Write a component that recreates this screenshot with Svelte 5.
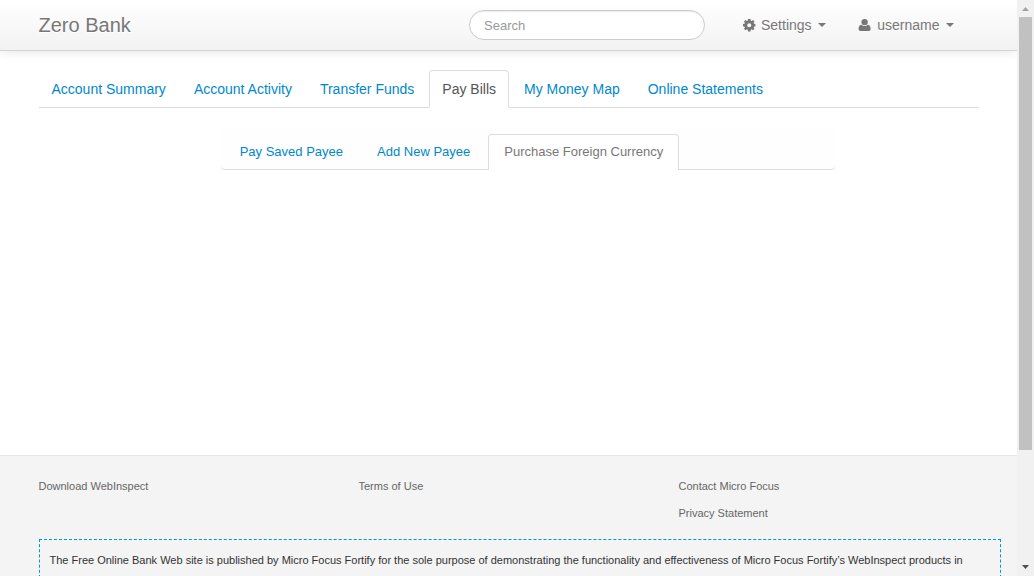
<script>
  const tabs = ['Account Summary', 'Account Activity', 'Transfer Funds', 'Pay Bills', 'My Money Map', 'Online Statements'];
  const billTabs = ['Pay Saved Payee', 'Add New Payee', 'Purchase Foreign Currency'];
  const footerColumns = [['Download WebInspect'], ['Terms of Use'], ['Contact Micro Focus', 'Privacy Statement']];
  const activeTab = 'Pay Bills';
  const activeBillTab = 'Purchase Foreign Currency';
</script>

<div class="window">
  <div class="page">
    <header>
      <div class="container bar">
        <span class="brand">Zero Bank</span>
        <input type="text" placeholder="Search" />
        <div class="menu settings">
          <svg width="14" height="14" viewBox="0 0 14 14" fill="#777">
            <path fill-rule="evenodd" d="M6 1h2.500l.3 1.700.8.350 1.400-1 1.500 1.500-.9 1.350.35.85 1.450.3v2.300l-1.450.3-.35.85.9 1.350-1.500 1.500-1.400-1-.8.350-.3 1.700H6l-.3-1.700-.8-.350-1.400 1-1.500-1.500.9-1.350-.35-.85L1 8.350v-2.300l1.550-.3.35-.85-.9-1.350 1.500-1.500 1.400 1 .8-.350zM7.250 5.150a2.050 2.050 0 1 0 0 4.100 2.050 2.050 0 0 0 0-4.100z" />
          </svg>
          <span>Settings</span><i class="caret"></i>
        </div>
        <div class="menu user">
          <svg width="14" height="14" viewBox="0 0 14 14" fill="#777">
            <circle cx="6.600" cy="4.100" r="3.200" />
            <path d="M3.500 6.700c.8.900 1.900 1.400 3.100 1.400s2.300-.5 3.100-1.400c1.900.1 2.900 1.600 2.900 4.300 0 1.300-.7 2-1.800 2H2.400c-1.100 0-1.800-.7-1.800-2 0-2.700 1-4.200 2.900-4.300z" />
          </svg>
          <span>username</span><i class="caret"></i>
        </div>
      </div>
    </header>

    <main class="container">
      <nav class="tabs">
        {#each tabs as tab}
          <span class="tab" class:active={tab === activeTab}>{tab}</span>
        {/each}
      </nav>
      <nav class="bill-tabs">
        {#each billTabs as tab}
          <span class="bill-tab" class:active={tab === activeBillTab}>{tab}</span>
        {/each}
      </nav>
    </main>

    <footer>
      <div class="container links">
        {#each footerColumns as column}
          <div class="column">
            {#each column as link}<span>{link}</span>{/each}
          </div>
        {/each}
      </div>
      <div class="disclaimer">
        The Free Online Bank Web site is published by Micro Focus Fortify for the sole purpose of demonstrating the functionality and effectiveness of Micro Focus Fortify’s WebInspect products in
      </div>
    </footer>
  </div>

  <div class="scrollbar">
    <svg width="17" height="17" viewBox="0 0 17 17"><path d="M5 11l3.500-4 3.500 4z" fill="#a3a3a3" /></svg>
    <div class="thumb"></div>
    <svg class="down" width="17" height="17" viewBox="0 0 17 17"><path d="M5 6l3.500 4L12 6z" fill="#505050" /></svg>
  </div>
</div>

<style>
  :global(body) {
    margin: 0;
    overflow: hidden;
  }
  .window {
    display: flex;
    width: 1034px;
    height: 576px;
    overflow: hidden;
    background: #fff;
    font: 14px/20px "Liberation Sans", Arial, sans-serif;
    color: #333;
  }
  .page {
    display: flex;
    flex-direction: column;
    width: 1017px;
    height: 576px;
    overflow: hidden;
  }
  .container {
    width: 940px;
    margin: 0 auto;
  }
  header {
    flex: none;
    height: 50px;
    border-bottom: 1px solid #d4d4d4;
    background: linear-gradient(#fff, #f2f2f2);
    box-shadow: 0 1px 10px rgba(0, 0, 0, 0.1);
    color: #777;
    text-shadow: 0 1px 0 #fff;
  }
  .bar {
    display: flex;
    align-items: center;
    height: 50px;
  }
  .brand {
    width: 430.5px;
    font-size: 20px;
  }
  input {
    box-sizing: border-box;
    width: 236px;
    height: 30px;
    padding: 4px 14px;
    border: 1px solid #ccc;
    border-radius: 15px;
    background: #fff;
    box-shadow: inset 0 1px 1px rgba(0, 0, 0, 0.075);
    font: 13px/20px "Liberation Sans", Arial, sans-serif;
  }
  input::placeholder {
    color: #999;
    opacity: 1;
  }
  .menu {
    display: flex;
    align-items: center;
  }
  .settings {
    margin-left: 37px;
  }
  .user {
    margin-left: 32.6px;
  }
  .menu svg {
    margin-right: 5px;
  }
  .caret {
    margin-left: 6px;
    border-top: 4px solid #777;
    border-right: 4px solid transparent;
    border-left: 4px solid transparent;
  }
  .user .caret {
    margin-left: 6.6px;
  }
  main {
    flex: none;
    height: 404px;
  }
  .tabs {
    display: flex;
    gap: 2px;
    height: 37px;
    margin-top: 19px;
    border-bottom: 1px solid #ddd;
  }
  .tab {
    height: 20px;
    padding: 8px 12px;
    border: 1px solid transparent;
    border-radius: 4px 4px 0 0;
    color: #08c;
  }
  .tab.active {
    border-color: #ddd;
    border-bottom-color: #fff;
    background: #fff;
    color: #555;
  }
  .bill-tabs {
    display: flex;
    gap: 2px;
    box-sizing: border-box;
    width: 614.8px;
    height: 43px;
    margin: 19px 0 0 182.2px;
    padding: 7px 3px 0;
    border-bottom: 1px solid #ddd;
    border-radius: 4px;
    background: #fefefe;
    font-size: 13px;
  }
  .bill-tab {
    height: 20px;
    padding: 7px 15px 8px;
    border: 1px solid transparent;
    border-bottom: 0;
    border-radius: 4px 4px 0 0;
    color: #08c;
  }
  .bill-tab.active {
    border-color: #ddd;
    background: #fff;
    color: #777;
  }
  footer {
    flex: 1;
    border-top: 1px solid #e5e5e5;
    background: #f4f4f4;
    font-size: 11px;
  }
  .links {
    display: flex;
    height: 63px;
    padding-top: 20px;
    color: #666;
  }
  .column {
    display: flex;
    flex: none;
    flex-direction: column;
    gap: 7px;
    width: 320px;
  }
  .disclaimer {
    box-sizing: border-box;
    width: 962px;
    height: 80px;
    margin-left: 38.5px;
    padding: 10px;
    border: 1px dashed #0096d6;
    white-space: nowrap;
  }
  .scrollbar {
    display: flex;
    flex-direction: column;
    width: 17px;
    height: 576px;
    background: #f1f1f1;
  }
  .scrollbar svg {
    display: block;
    flex: none;
  }
  .thumb {
    width: 13px;
    height: 433px;
    margin-left: 2px;
    background: #c1c1c1;
  }
  .scrollbar .down {
    margin-top: auto;
  }
</style>
